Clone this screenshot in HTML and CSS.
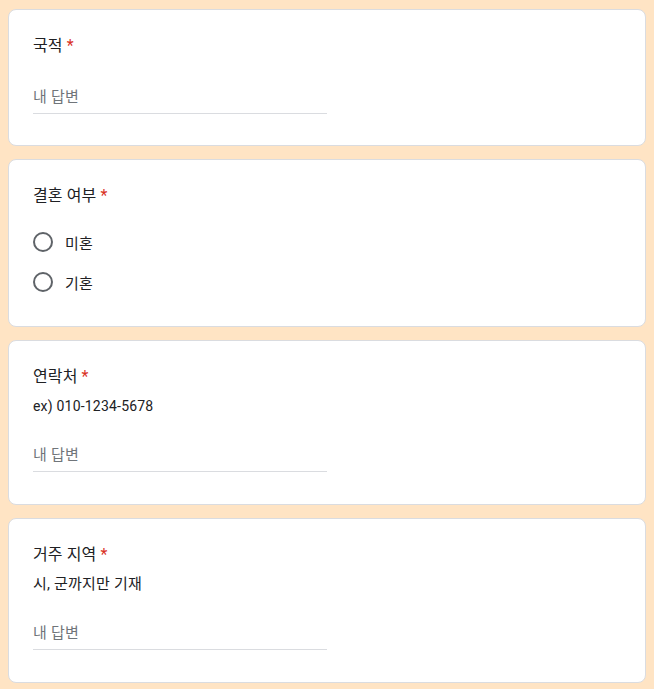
FILE: index.html
```html
<html lang="ko">
<head>
    <meta charset="UTF-8">
    <meta name="viewport" content="width=device-width, initial-scale=1.0">
    <title>신청서</title>
    <link rel="stylesheet" href="styles.css">
</head>
<body>
    <div class="form">
        <div class="card">
            <div class="title">국적 <span class="required">*</span></div>
            <div class="answer">내 답변</div>
        </div>

        <div class="card">
            <div class="title">결혼 여부 <span class="required">*</span></div>
            <div class="options">
                <div class="option"><span class="radio"></span>미혼</div>
                <div class="option"><span class="radio"></span>기혼</div>
            </div>
        </div>

        <div class="card">
            <div class="title">연락처 <span class="required">*</span></div>
            <div class="desc">ex) 010-1234-5678</div>
            <div class="answer">내 답변</div>
        </div>

        <div class="card">
            <div class="title">거주 지역 <span class="required">*</span></div>
            <div class="desc ko">시, 군까지만 기재</div>
            <div class="answer">내 답변</div>
        </div>
    </div>
</body>
</html>
```

FILE: styles.css
```css
body {
    margin: 0;
    background-color: #ffe4c4;
    font-family: Roboto, "Noto Sans CJK KR", Arial, sans-serif;
    color: #202124;
}

.form {
    display: flex;
    flex-direction: column;
    gap: 13px;
    padding: 9px 8px;
}

.card {
    background-color: #fff;
    border: 1px solid #dadce0;
    border-radius: 8px;
    padding: 24px;
}

.title {
    font-size: 16px;
    line-height: 24px;
    letter-spacing: 0.1px;
}

.required {
    color: #d93025;
}

.desc {
    font-size: 14px;
    line-height: 20px;
    letter-spacing: 0.2px;
    margin-top: 7px;
}

.desc.ko {
    font-size: 15px;
}

.answer {
    width: 50%;
    height: 31px;
    margin-top: 24px;
    margin-bottom: 7px;
    border-bottom: 1px solid #dadce0;
    font-size: 15px;
    line-height: 31px;
    letter-spacing: 0.2px;
    color: #70757a;
}

.desc + .answer {
    margin-bottom: 8px;
}

.options {
    margin-top: 14px;
}

.option {
    display: flex;
    align-items: center;
    height: 40px;
    font-size: 15px;
    letter-spacing: 0.2px;
}

.radio {
    width: 16px;
    height: 16px;
    border: 2px solid #5f6368;
    border-radius: 50%;
    margin-right: 12px;
}
```
